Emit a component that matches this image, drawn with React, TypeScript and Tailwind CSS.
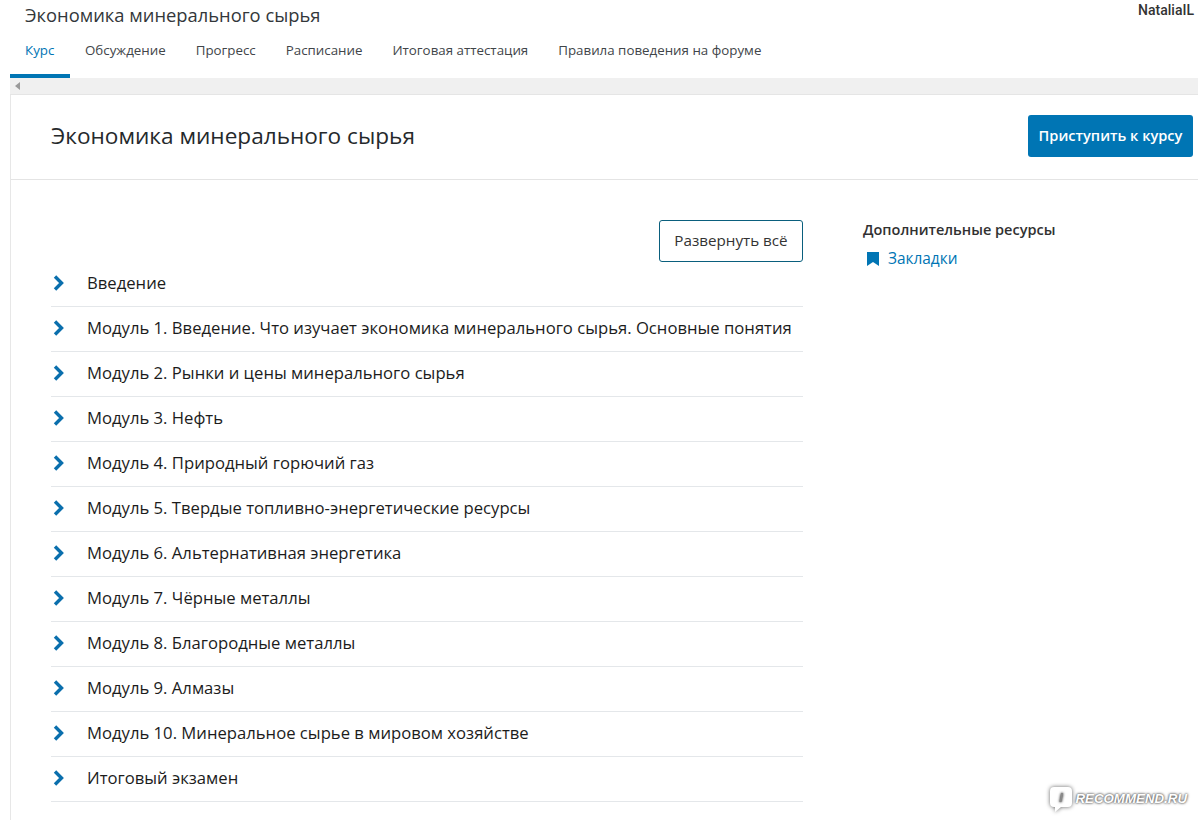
import React from "react";

const tabs = [
  "Курс",
  "Обсуждение",
  "Прогресс",
  "Расписание",
  "Итоговая аттестация",
  "Правила поведения на форуме",
];

const modules = [
  "Введение",
  "Модуль 1. Введение. Что изучает экономика минерального сырья. Основные понятия",
  "Модуль 2. Рынки и цены минерального сырья",
  "Модуль 3. Нефть",
  "Модуль 4. Природный горючий газ",
  "Модуль 5. Твердые топливно-энергетические ресурсы",
  "Модуль 6. Альтернативная энергетика",
  "Модуль 7. Чёрные металлы",
  "Модуль 8. Благородные металлы",
  "Модуль 9. Алмазы",
  "Модуль 10. Минеральное сырье в мировом хозяйстве",
  "Итоговый экзамен",
];

const Chevron = () => (
  <svg width="11" height="16" viewBox="0 0 11 16" className="shrink-0">
    <path d="M2 1.5 L8.5 8 L2 14.5" fill="none" stroke="#0a6fad" strokeWidth="3.4" />
  </svg>
);

const Bookmark = () => (
  <svg width="12" height="14" viewBox="0 0 12 14" className="shrink-0">
    <path d="M0 0 H12 V14 L6 10 L0 14 Z" fill="#0075b4" />
  </svg>
);

// speech bubble from the watermark
const Bubble = () => (
  <svg width="24" height="27" viewBox="0 0 24 27" className="shrink-0 drop-shadow-[0_0_2px_#666]">
    <path
      d="M5 1 H19 Q23 1 23 5 V17 Q23 21 19 21 H12 L6 26 V21 H5 Q1 21 1 17 V5 Q1 1 5 1 Z"
      fill="#fff"
    />
    <text x="12" y="16" textAnchor="middle" fontSize="13" fontWeight="700" fill="#8a8a8a">
      I
    </text>
  </svg>
);

export default function App() {
  return (
    <div className="relative h-[820px] w-[1198px] overflow-hidden bg-white font-['Open_Sans',sans-serif] text-[#313131]">
      {/* Top bar */}
      <div className="relative h-[78px] pl-[10px]">
        <div className="pl-[15px] pt-[3px] text-[18.35px] leading-[24px] text-[#33373a]">
          Экономика минерального сырья
        </div>
        <nav className="mt-[7px] flex">
          {tabs.map((tab, i) => (
            <div
              key={tab}
              className={
                i === 0
                  ? "h-[44px] w-[60px] border-b-4 border-[#0075b4] pl-[15px] pt-[7px] text-[13.33px] leading-[18px] text-[#0075b4]"
                  : "h-[44px] px-[15px] pt-[7px] text-[13.33px] leading-[18px] text-[#414549]"
              }
            >
              {tab}
            </div>
          ))}
        </nav>
        <div className="absolute right-[4px] top-[2px] font-['Roboto',sans-serif] text-[14px] font-medium leading-[16px] text-[#333]">
          NataliaIL
        </div>
      </div>

      {/* Scrollbar strip */}
      <div className="ml-[10px] flex h-[17px] items-center border-b border-[#e5e5e5] bg-[#f0f0f0] pl-[5px]">
        <div className="h-0 w-0 border-y-[4px] border-r-[5px] border-y-transparent border-r-[#9a9a9a]" />
      </div>

      <main className="ml-[10px] h-[725px] border-l border-[#e7e7e7]">
        {/* Course header */}
        <header className="flex h-[85px] items-center justify-between border-b border-[#e4e4e4] pl-[40px] pr-[5px]">
          <h1 className="pb-[2px] text-[22.6px] font-normal leading-[28px] text-[#25292c]">
            Экономика минерального сырья
          </h1>
          <button className="mb-[2px] h-[42px] w-[165px] rounded-[3px] bg-[#0075b4] text-[14.6px] font-semibold text-white">
            Приступить к курсу
          </button>
        </header>

        <div className="flex pl-[40px]">
          {/* Outline */}
          <section className="w-[752px] pt-[40px]">
            <div className="flex justify-end">
              <button className="h-[42px] w-[144px] rounded-[3px] border border-[#0a5f7d] pb-[2px] text-[15.2px] text-[#333]">
                Развернуть всё
              </button>
            </div>
            <ul>
              {modules.map((m) => (
                <li
                  key={m}
                  className="flex h-[45px] items-center gap-[23px] border-b border-[#e4e7ea] pb-[2px] pl-[2px] text-[16.66px] text-[#1c1c1c]"
                >
                  <Chevron />
                  <span>{m}</span>
                </li>
              ))}
            </ul>
          </section>

          {/* Sidebar */}
          <aside className="ml-[60px] pt-[39px]">
            <h2 className="text-[14.5px] font-semibold leading-[22px] text-[#313131]">
              Дополнительные ресурсы
            </h2>
            <a className="mt-[7px] flex items-center gap-[9px] pl-[4px] text-[15.4px] leading-[22px] text-[#0075b4]">
              <Bookmark />
              Закладки
            </a>
          </aside>
        </div>
      </main>

      {/* Watermark */}
      <div className="absolute bottom-[7px] right-[11px] flex items-start gap-[2px] font-['Liberation_Sans',sans-serif] text-[13.3px] font-bold italic leading-[26px] text-white [text-shadow:0_0_3px_#555,0_0_2px_#555]">
        <Bubble />
        RECOMMEND.RU
      </div>
    </div>
  );
}
